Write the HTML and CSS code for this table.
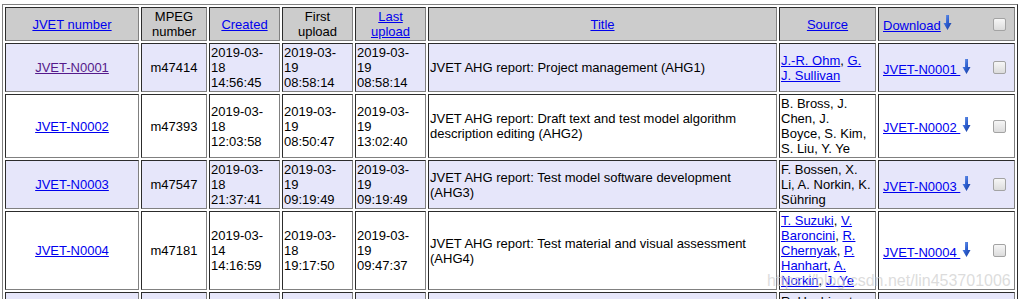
FILE: index.html
```html
<!DOCTYPE html>
<html>
<head>
<meta charset="utf-8">
<title>JVET documents</title>
<link rel="stylesheet" href="styles.css">
</head>
<body>
<table class="docs">
  <thead>
    <tr class="head">
      <th class="c-num"><a href="#">JVET number</a></th>
      <th class="c-mpeg">MPEG number</th>
      <th class="c-date"><a href="#">Created</a></th>
      <th class="c-date">First<br>upload</th>
      <th class="c-date"><a href="#">Last<br>upload</a></th>
      <th class="c-title"><a href="#">Title</a></th>
      <th class="c-src"><a href="#">Source</a></th>
      <th class="c-dl">
        <div class="dl"><span class="dl-link"><a href="#">Download</a><svg class="arrow" width="11" height="15" viewBox="0 0 11 15"><defs><linearGradient id="ag" x1="0" y1="0" x2="1" y2="1"><stop offset="0" stop-color="#7fa6ee"/><stop offset="0.5" stop-color="#2d5fd0"/><stop offset="1" stop-color="#173a96"/></linearGradient></defs><path d="M4 0H7V8H9.5L5.5 15L1.5 8H4Z" fill="url(#ag)"/></svg></span><input class="cb" type="checkbox"></div>
      </th>
    </tr>
  </thead>
  <tbody>
    <tr class="odd">
      <td class="num"><a class="visited" href="#">JVET-N0001</a></td>
      <td class="mpeg">m47414</td>
      <td class="date">2019-03-<br>18<br>14:56:45</td>
      <td class="date">2019-03-<br>19<br>08:58:14</td>
      <td class="date">2019-03-<br>19<br>08:58:14</td>
      <td class="title">JVET AHG report: Project management (AHG1)</td>
      <td class="src"><a href="#">J.-R. Ohm</a>, <a href="#">G. J. Sullivan</a></td>
      <td class="dlc"><div class="dl"><span class="dl-link"><a href="#">JVET-N0001 </a><svg class="arrow" width="11" height="15" viewBox="0 0 11 15"><path d="M4 0H7V8H9.5L5.5 15L1.5 8H4Z" fill="url(#ag)"/></svg></span><input class="cb" type="checkbox"></div></td>
    </tr>
    <tr class="even">
      <td class="num"><a href="#">JVET-N0002</a></td>
      <td class="mpeg">m47393</td>
      <td class="date">2019-03-<br>18<br>12:03:58</td>
      <td class="date">2019-03-<br>19<br>08:50:47</td>
      <td class="date">2019-03-<br>19<br>13:02:40</td>
      <td class="title">JVET AHG report: Draft text and test model algorithm description editing (AHG2)</td>
      <td class="src">B. Bross, J. Chen, J. Boyce, S. Kim, S. Liu, Y. Ye</td>
      <td class="dlc"><div class="dl"><span class="dl-link"><a href="#">JVET-N0002 </a><svg class="arrow" width="11" height="15" viewBox="0 0 11 15"><path d="M4 0H7V8H9.5L5.5 15L1.5 8H4Z" fill="url(#ag)"/></svg></span><input class="cb" type="checkbox"></div></td>
    </tr>
    <tr class="odd">
      <td class="num"><a href="#">JVET-N0003</a></td>
      <td class="mpeg">m47547</td>
      <td class="date">2019-03-<br>18<br>21:37:41</td>
      <td class="date">2019-03-<br>19<br>09:19:49</td>
      <td class="date">2019-03-<br>19<br>09:19:49</td>
      <td class="title">JVET AHG report: Test model software development (AHG3)</td>
      <td class="src">F. Bossen, X. Li, A. Norkin, K. Sühring</td>
      <td class="dlc"><div class="dl"><span class="dl-link"><a href="#">JVET-N0003 </a><svg class="arrow" width="11" height="15" viewBox="0 0 11 15"><path d="M4 0H7V8H9.5L5.5 15L1.5 8H4Z" fill="url(#ag)"/></svg></span><input class="cb" type="checkbox"></div></td>
    </tr>
    <tr class="even">
      <td class="num"><a href="#">JVET-N0004</a></td>
      <td class="mpeg">m47181</td>
      <td class="date">2019-03-<br>14<br>14:16:59</td>
      <td class="date">2019-03-<br>18<br>19:17:50</td>
      <td class="date">2019-03-<br>19<br>09:47:37</td>
      <td class="title">JVET AHG report: Test material and visual assessment (AHG4)</td>
      <td class="src"><a href="#">T. Suzuki</a>, <a href="#">V. Baroncini</a>, <a href="#">R. Chernyak</a>, <a href="#">P. Hanhart</a>, <a href="#">A. Norkin</a>, <a href="#">J. Ye</a></td>
      <td class="dlc"><div class="dl"><span class="dl-link"><a href="#">JVET-N0004 </a><svg class="arrow" width="11" height="15" viewBox="0 0 11 15"><path d="M4 0H7V8H9.5L5.5 15L1.5 8H4Z" fill="url(#ag)"/></svg></span><input class="cb" type="checkbox"></div></td>
    </tr>
    <tr class="odd">
      <td class="num"><a href="#">JVET-N0005</a></td>
      <td class="mpeg">m47310</td>
      <td class="date">2019-03-<br>18<br>10:12:33</td>
      <td class="date">2019-03-<br>19<br>07:41:05</td>
      <td class="date">2019-03-<br>19<br>07:41:05</td>
      <td class="title">JVET AHG report: Memory bandwidth consumption of coding tools (AHG5)</td>
      <td class="src">R. Hashimoto, E. Alshina, T. Ikai, H. Yang, X. Li, M. Zhou, S. Liu, C. Rosewarne, J. Boyce</td>
      <td class="dlc"><div class="dl"><span class="dl-link"><a href="#">JVET-N0005 </a><svg class="arrow" width="11" height="15" viewBox="0 0 11 15"><path d="M4 0H7V8H9.5L5.5 15L1.5 8H4Z" fill="url(#ag)"/></svg></span><input class="cb" type="checkbox"></div></td>
    </tr>
  </tbody>
</table>
<div class="wm">https://blog.csdn.net/lin453701006</div>
</body>
</html>
```
FILE: styles.css
```css
html, body {
  margin: 0;
  overflow: hidden;
  background: #fff;
}
body {
  position: relative;
  height: 299px;
  box-sizing: border-box;
  padding: 4px 0 0 2px;
  font-family: "Liberation Sans", Arial, sans-serif;
  font-size: 13px;
  line-height: 15px;
  color: #000;
}
a {
  color: #0000ee;
  text-decoration: underline;
}
a.visited {
  color: #551a8b;
}
.docs {
  width: 1016px;
  table-layout: fixed;
  border: 1px outset #808080;
  border-spacing: 2px;
}
.docs th,
.docs td {
  box-sizing: border-box;
  border: 1px inset #808080;
  padding: 1px;
  vertical-align: middle;
  font-weight: normal;
}
.docs .head th {
  background: #cccccc;
  text-align: center;
}
.docs .odd td {
  background: #e6e6fa;
}
.docs .even td {
  background: #ffffff;
}
.c-num { width: 134px; }
.c-mpeg { width: 66px; }
.c-date { width: 71px; }
.c-title { width: 349px; }
.c-src { width: 97px; }
.c-dl { width: 137px; }
.docs td.num,
.docs td.mpeg {
  text-align: center;
}
.docs td.date,
.docs td.title {
  text-align: left;
}
.docs td.src {
  text-align: left;
  padding-right: 3px;
}
.docs .head th.c-dl,
.docs td.dlc {
  padding: 1px 8px 1px 4px;
  text-align: left;
}
.dl {
  display: flex;
  align-items: center;
}
.dl-link {
  white-space: nowrap;
}
.arrow {
  display: inline-block;
  vertical-align: baseline;
  margin-left: 1px;
}
.cb {
  appearance: none;
  -webkit-appearance: none;
  margin: 0 0 0 auto;
  width: 13px;
  height: 13px;
  box-sizing: border-box;
  border: 1px solid #a3a3a3;
  border-radius: 2px;
  background: linear-gradient(#f6f6f6, #dcdcdc);
}
.wm {
  position: absolute;
  left: 767px;
  top: 273px;
  font-size: 16px;
  line-height: 16px;
  color: rgba(205, 205, 205, 0.7);
  white-space: nowrap;
  pointer-events: none;
}
```
